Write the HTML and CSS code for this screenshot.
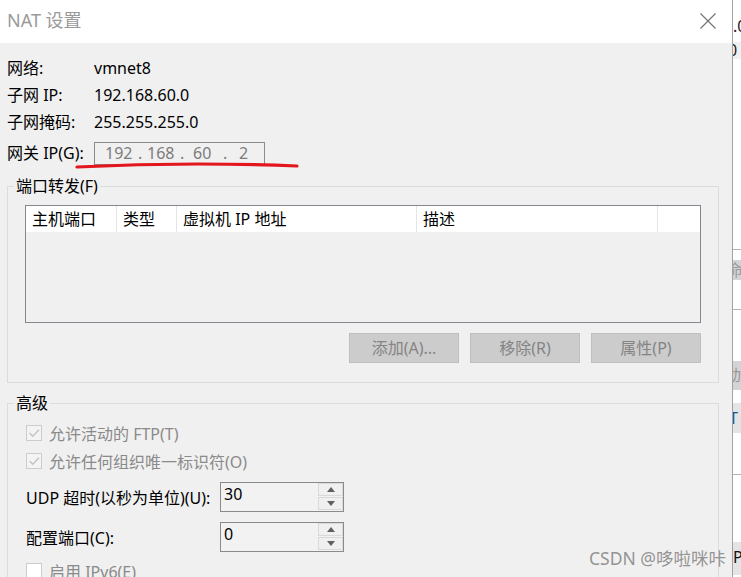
FILE: index.html
```html
<!DOCTYPE html>
<html lang="zh-CN">
<head>
<meta charset="utf-8">
<title>NAT 设置</title>
<link rel="stylesheet" href="styles.css">
</head>
<body>
<div class="screen">
  <div class="dialog">
    <div class="titlebar">
      <span class="title">NAT 设置</span>
      <svg class="close" viewBox="0 0 16 16" width="16" height="16"><path d="M0.5 0.5 L15.5 15.5 M15.5 0.5 L0.5 15.5" stroke="#707070" stroke-width="1.1" fill="none"/></svg>
    </div>
    <div class="content">
      <div class="info">
        <div class="row"><span class="lbl">网络:</span><span>vmnet8</span></div>
        <div class="row"><span class="lbl">子网 IP:</span><span>192.168.60.0</span></div>
        <div class="row"><span class="lbl">子网掩码:</span><span>255.255.255.0</span></div>
        <div class="row gw"><span class="lbl">网关 IP(G):</span>
          <div class="ipbox"><span>192</span><span>.</span><span>168</span><span>.</span><span>60</span><span>.</span><span>2</span></div>
        </div>
      </div>

      <fieldset class="group pf">
        <legend>端口转发(F)</legend>
        <div class="list">
          <div class="lhead">
            <div class="col c1">主机端口</div>
            <div class="col c2">类型</div>
            <div class="col c3">虚拟机 IP 地址</div>
            <div class="col c4">描述</div>
            <div class="col c5"></div>
          </div>
        </div>
        <div class="btns">
          <button class="btn" disabled>添加(A)...</button>
          <button class="btn" disabled>移除(R)</button>
          <button class="btn" disabled>属性(P)</button>
        </div>
      </fieldset>

      <fieldset class="group adv">
        <legend>高级</legend>
        <div class="chk"><span class="box"><svg viewBox="0 0 14 14" width="14" height="14"><path d="M2.5 7 L5.8 10.3 L12 3.8" stroke="#c2c2c2" stroke-width="1.3" fill="none"/></svg></span>允许活动的 FTP(T)</div>
        <div class="chk"><span class="box"><svg viewBox="0 0 14 14" width="14" height="14"><path d="M2.5 7 L5.8 10.3 L12 3.8" stroke="#c2c2c2" stroke-width="1.3" fill="none"/></svg></span>允许任何组织唯一标识符(O)</div>
        <div class="spinrow first">
          <span class="slbl">UDP 超时(以秒为单位)(U):</span>
          <div class="spin">
            <span class="val">30</span>
            <div class="arrows">
              <div class="arr"><svg viewBox="0 0 8 5" width="8" height="5"><path d="M0 5 L4 0 L8 5 Z" fill="#606060"/></svg></div>
              <div class="arr"><svg viewBox="0 0 8 5" width="8" height="5"><path d="M0 0 L8 0 L4 5 Z" fill="#606060"/></svg></div>
            </div>
          </div>
        </div>
        <div class="spinrow second">
          <span class="slbl">配置端口(C):</span>
          <div class="spin">
            <span class="val">0</span>
            <div class="arrows">
              <div class="arr"><svg viewBox="0 0 8 5" width="8" height="5"><path d="M0 5 L4 0 L8 5 Z" fill="#606060"/></svg></div>
              <div class="arr"><svg viewBox="0 0 8 5" width="8" height="5"><path d="M0 0 L8 0 L4 5 Z" fill="#606060"/></svg></div>
            </div>
          </div>
        </div>
        <div class="chk last"><span class="box empty"></span>启用 IPv6(E)</div>
      </fieldset>
    </div>
  </div>

  <div class="strip">
    <div class="s-a">.0</div>
    <div class="s-b">0</div>
    <div class="s-gap g1"></div>
    <div class="s-line"></div>
    <div class="s-gap g2"></div>
    <div class="s-band b1">命</div>
    <div class="s-gap g3"></div>
    <div class="s-line"></div>
    <div class="s-gap g4"></div>
    <div class="s-band b2">动</div>
    <div class="s-gap g5"></div>
    <div class="s-band b3">T</div>
    <div class="s-gap g6"></div>
    <div class="s-line"></div>
    <div class="s-gap g7"></div>
    <div class="s-band b4">P</div>
  </div>

  <svg class="redline" viewBox="0 0 235 14" width="235" height="14"><path d="M7 9 Q 117 3.5 227 8" stroke="#e3161d" stroke-width="3.2" stroke-linecap="round" fill="none"/></svg>
  <div class="watermark">CSDN @哆啦咪咔</div>
</div>
</body>
</html>
```

FILE: styles.css
```css
html, body {
  margin: 0;
  padding: 0;
  background: #ffffff;
}

body {
  font-family: "Noto Sans", "Noto Sans CJK SC", sans-serif;
  font-size: 16px;
  color: #000000;
}

.screen {
  position: relative;
  width: 741px;
  height: 577px;
  overflow: hidden;
  display: flex;
  background: #ffffff;
}

.dialog {
  width: 732px;
  flex: none;
  border-right: 1px solid #a3a3a3;
  background: #f0f0f0;
  display: flex;
  flex-direction: column;
}

.titlebar {
  height: 43px;
  flex: none;
  background: #ffffff;
  display: flex;
  align-items: center;
  justify-content: space-between;
  padding: 0 16px 0 7px;
  box-sizing: border-box;
}

.title {
  font-size: 18px;
  line-height: 20px;
  color: #9a9a9a;
  margin-top: -3px;
}

.close {
  display: block;
  margin-top: -1px;
}

.info {
  padding: 12px 0 0 7px;
}

.row {
  display: flex;
  align-items: center;
  height: 27px;
  line-height: 27px;
}

.lbl {
  width: 87px;
  flex: none;
}

.row.gw {
  margin-top: 6px;
  height: 23px;
  line-height: 23px;
}

.ipbox {
  width: 171px;
  height: 23px;
  box-sizing: border-box;
  border: 1px solid #8c8c8c;
  display: grid;
  grid-template-columns: 33px 9px 33px 13px 30px 16px auto;
  padding-left: 10px;
  line-height: 21px;
  color: #7c7c7c;
}

.group {
  margin: 11px 13px 0 7px;
  border: 1px solid #dcdcdc;
  min-width: 0;
}

.group legend {
  padding: 0 2px;
  line-height: 20px;
  font-size: 16px;
}

.pf {
  padding: 9px 17px 19px 17px;
}

.pf legend {
  margin-left: -11px;
}

.list {
  height: 118px;
  box-sizing: border-box;
  border: 1px solid #828790;
  background: #f0f0f0;
}

.lhead {
  display: flex;
  height: 26px;
  background: #ffffff;
}

.col {
  box-sizing: border-box;
  border-right: 1px solid #e5e5e5;
  padding-left: 6px;
  line-height: 26px;
  white-space: nowrap;
}

.c1 { width: 91px; }
.c2 { width: 60px; }
.c3 { width: 240px; }
.c4 { width: 241px; }
.c5 { flex: 1; border-right: none; }

.btns {
  display: flex;
  justify-content: flex-end;
  gap: 11px;
  margin-top: 10px;
}

.btn {
  width: 110px;
  height: 30px;
  padding: 0;
  box-sizing: border-box;
  background: #cccccc;
  border: 1px solid #bfbfbf;
  color: #848484;
  font-family: inherit;
  font-size: 16px;
  line-height: 28px;
}

.adv {
  margin-top: 10px;
  padding: 6px 17px 0 18px;
  border-bottom: none;
  flex: 1;
}

.adv legend {
  margin-left: -12px;
}

.chk {
  display: flex;
  align-items: center;
  height: 28px;
  color: #8a8a8a;
  white-space: nowrap;
}

.chk.last {
  margin-top: 5px;
}

.box {
  width: 16px;
  height: 16px;
  box-sizing: border-box;
  border: 1px solid #cccccc;
  background: #f4f4f4;
  margin-right: 7px;
  display: flex;
  align-items: center;
  justify-content: center;
}

.box svg {
  display: block;
}

.box.empty {
  background: #ffffff;
}

.spinrow {
  display: flex;
  align-items: center;
  height: 30px;
}

.spinrow.first {
  margin-top: 7px;
}

.spinrow.second {
  margin-top: 10px;
}

.slbl {
  width: 194px;
  flex: none;
  white-space: nowrap;
}

.spin {
  width: 124px;
  height: 30px;
  box-sizing: border-box;
  border: 1px solid #8a8a8a;
  background: #f2f2f2;
  display: flex;
  justify-content: space-between;
}

.val {
  padding-left: 3px;
  line-height: 22px;
}

.arrows {
  width: 25px;
  display: flex;
  flex-direction: column;
  gap: 1px;
}

.arr {
  height: 13px;
  box-sizing: border-box;
  border: 1px solid #d9d9d9;
  background: #f0f0f0;
  display: flex;
  align-items: center;
  justify-content: center;
}

.arr svg {
  display: block;
}

/* background window strip on the right */
.strip {
  flex: 1;
  overflow: hidden;
  background: #ffffff;
  font-size: 16px;
  white-space: nowrap;
}

.s-a {
  height: 42px;
  box-sizing: border-box;
  padding-top: 16px;
  line-height: 20px;
  color: #1a1a1a;
}

.s-b {
  height: 17px;
  line-height: 17px;
  background: #f0f0f0;
  text-indent: -5px;
  color: #1a1a1a;
}

.s-line {
  height: 1px;
  background: #b4b4b4;
}

.g1 { height: 190px; }
.g2 { height: 10px; }
.g3 { height: 29px; }
.g4 { height: 51px; }
.g5 { height: 13px; }
.g6 { height: 41px; }
.g7 { height: 67px; }

.s-band {
  background: #d4d4d4;
  color: #9a9a9a;
  overflow: hidden;
}

.b1 { height: 20px; line-height: 20px; text-indent: -6px; }
.b2 { height: 29px; line-height: 29px; text-indent: -8px; }
.b3 { height: 30px; line-height: 30px; background: #e4e4e4; color: #1f4f8f; text-indent: -4px; }
.b4 { height: 33px; line-height: 30px; background: #e4e4e4; color: #111111; }

/* overlays */
.redline {
  position: absolute;
  left: 70px;
  top: 158px;
}

.watermark {
  position: absolute;
  left: 589px;
  top: 547px;
  font-size: 17.5px;
  line-height: 22px;
  color: rgba(130, 130, 130, 0.85);
  white-space: nowrap;
}
```
